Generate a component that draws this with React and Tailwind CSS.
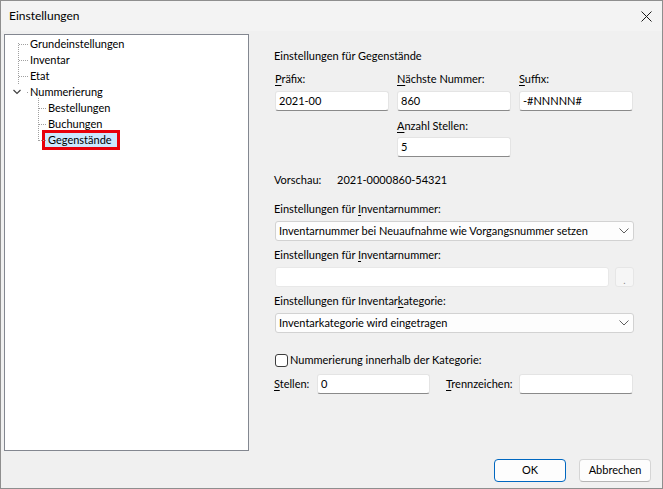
import React from "react";

const font = { fontFamily: 'Lato, "Liberation Sans", Arial, sans-serif' };

// underlined access key helper
const U = ({ children }) => <span className="underline underline-offset-2">{children}</span>;

const TextBox = ({ value = "", className = "" }) => (
  <div
    className={`h-[20px] bg-white border border-[#e4e4e4] border-b-[#8a8a8a] rounded-[3px] flex items-center pl-[3px] text-[11px] text-black shrink-0 ${className}`}
  >
    {value}
  </div>
);

const Select = ({ value }) => (
  <div className="h-[20px] w-[359px] bg-[#fdfdfd] border border-[#d2d2d2] rounded-[3px] flex items-center justify-between pl-[3px] pr-[4px] text-[11px] text-black whitespace-nowrap">
    <span>{value}</span>
    <svg width="10" height="6" viewBox="0 0 10 6">
      <path d="M0.5 0.5 L5 5 L9.5 0.5" fill="none" stroke="#5f5f5f" strokeWidth="1" />
    </svg>
  </div>
);

const TreeLines = () => (
  <svg className="absolute left-0 top-0" width="60" height="120">
    <g stroke="#a0a0a0" strokeWidth="1" strokeDasharray="1 1" fill="none">
      <path d="M13.5 8 V50" />
      <path d="M14 9.5 H24" />
      <path d="M14 25.5 H24" />
      <path d="M14 41.5 H24" />
      <path d="M33.5 63 V106" />
      <path d="M34 73.5 H42" />
      <path d="M34 89.5 H42" />
      <path d="M34 105.5 H42" />
    </g>
    <rect x="22" y="57" width="1" height="1" fill="#a0a0a0" />
    <path d="M8.5 55 L12 58.5 L15.5 55" fill="none" stroke="#404040" strokeWidth="1.2" />
  </svg>
);

const Tree = () => {
  const root = ["Grundeinstellungen", "Inventar", "Etat", "Nummerierung"];
  const kids = ["Bestellungen", "Buchungen"];
  return (
    <div className="relative w-[245px] h-[417px] bg-white border border-[#838790] pt-[1px] text-[11px] text-black">
      <TreeLines />
      {root.map((r) => (
        <div key={r} className="h-[16px] leading-[16px] pl-[25px]">
          {r}
        </div>
      ))}
      {kids.map((k) => (
        <div key={k} className="h-[16px] leading-[16px] pl-[43px]">
          {k}
        </div>
      ))}
      <div className="h-[16px] pl-[37px]">
        <div className="inline-block -mt-[2px] h-[20px] w-[78px] border-[3px] border-[#e8000b] bg-[#cce8ff] pl-[3px] leading-[14px]">
          Gegenstände
        </div>
      </div>
    </div>
  );
};

export default function App() {
  return (
    <div
      className="w-[663px] h-[489px] bg-[#f0f0f0] border border-[#8e8e8e] flex flex-col text-[11px] text-black whitespace-nowrap"
      style={font}
    >
      {/* title bar */}
      <div className="h-[30px] bg-[#f3f3f3] flex items-center justify-between pl-[8px] pr-[10px]">
        <span className="text-[12px]">Einstellungen</span>
        <svg width="11" height="11" viewBox="0 0 11 11">
          <path d="M0.5 0.5 L10.5 10.5 M10.5 0.5 L0.5 10.5" stroke="#1a1a1a" strokeWidth="1" />
        </svg>
      </div>

      <div className="flex pl-[3px] pt-[3px]">
        <Tree />

        {/* right panel */}
        <div className="ml-[25px] flex flex-col pt-[14px] leading-[16px]">
          <div className="h-[16px]">Einstellungen für Gegenstände</div>

          <div className="grid grid-cols-[114px_114px_114px] gap-x-[8px] mt-[7px] ml-[1px]">
            <div className="h-[16px]"><U>P</U>räfix:</div>
            <div className="h-[16px]"><U>N</U>ächste Nummer:</div>
            <div className="h-[16px]"><U>S</U>uffix:</div>
            <TextBox value="2021-00" className="mt-[4px]" />
            <TextBox value="860" className="mt-[4px]" />
            <TextBox value="-#NNNNN#" className="mt-[4px]" />
            <div />
            <div className="h-[16px] mt-[7px]"><U>A</U>nzahl Stellen:</div>
            <div />
            <div />
            <TextBox value="5" className="mt-[3px]" />
            <div />
          </div>

          <div className="flex h-[16px] mt-[15px]">
            <span className="w-[63px]">Vorschau:</span>
            <span>2021-0000860-54321</span>
          </div>

          <div className="h-[16px] mt-[13px]">
            Einstellungen für <U>I</U>nventarnummer:
          </div>
          <div className="mt-[4px] ml-[1px]">
            <Select value="Inventarnummer bei Neuaufnahme wie Vorgangsnummer setzen" />
          </div>

          <div className="h-[16px] mt-[6px]">
            Einstellungen für <U>I</U>nventarnummer:
          </div>
          <div className="flex gap-[6px] mt-[4px] ml-[1px]">
            <div className="h-[20px] w-[334px] bg-white border border-[#e8e8e8] rounded-[3px]" />
            <div className="h-[20px] w-[19px] bg-[#f6f6f6] border border-[#e6e6e6] rounded-[3px] flex items-end justify-center text-[10px] leading-[12px] text-[#8a8a8a]">
              .
            </div>
          </div>

          <div className="h-[16px] mt-[6px]">
            Einstellungen für Inventar<U>k</U>ategorie:
          </div>
          <div className="mt-[4px] ml-[1px]">
            <Select value="Inventarkategorie wird eingetragen" />
          </div>

          <div className="flex items-center h-[16px] mt-[19px] ml-[1px]">
            <div className="w-[13px] h-[13px] bg-white border border-[#3c3c3c] rounded-[3px]" />
            <span className="ml-[2px]">Nummerierung innerhalb der Kategorie:</span>
          </div>

          <div className="flex items-center mt-[6px]">
            <span className="w-[43px] shrink-0"><U>S</U>tellen:</span>
            <TextBox value="0" className="w-[113px]" />
            <span className="ml-[16px] w-[73px] shrink-0"><U>T</U>rennzeichen:</span>
            <TextBox className="w-[114px]" />
          </div>
        </div>
      </div>

      <div className="flex justify-end gap-[13px] mt-[8px] pr-[11px]">
        <div className="w-[72px] h-[23px] bg-[#fdfdfd] border border-[#0067c0] rounded-[4px] flex items-center justify-center">
          OK
        </div>
        <div className="w-[72px] h-[23px] bg-[#fdfdfd] border border-[#d5d5d5] border-b-[#b5b5b5] rounded-[4px] flex items-center justify-center">
          Abbrechen
        </div>
      </div>
    </div>
  );
}
